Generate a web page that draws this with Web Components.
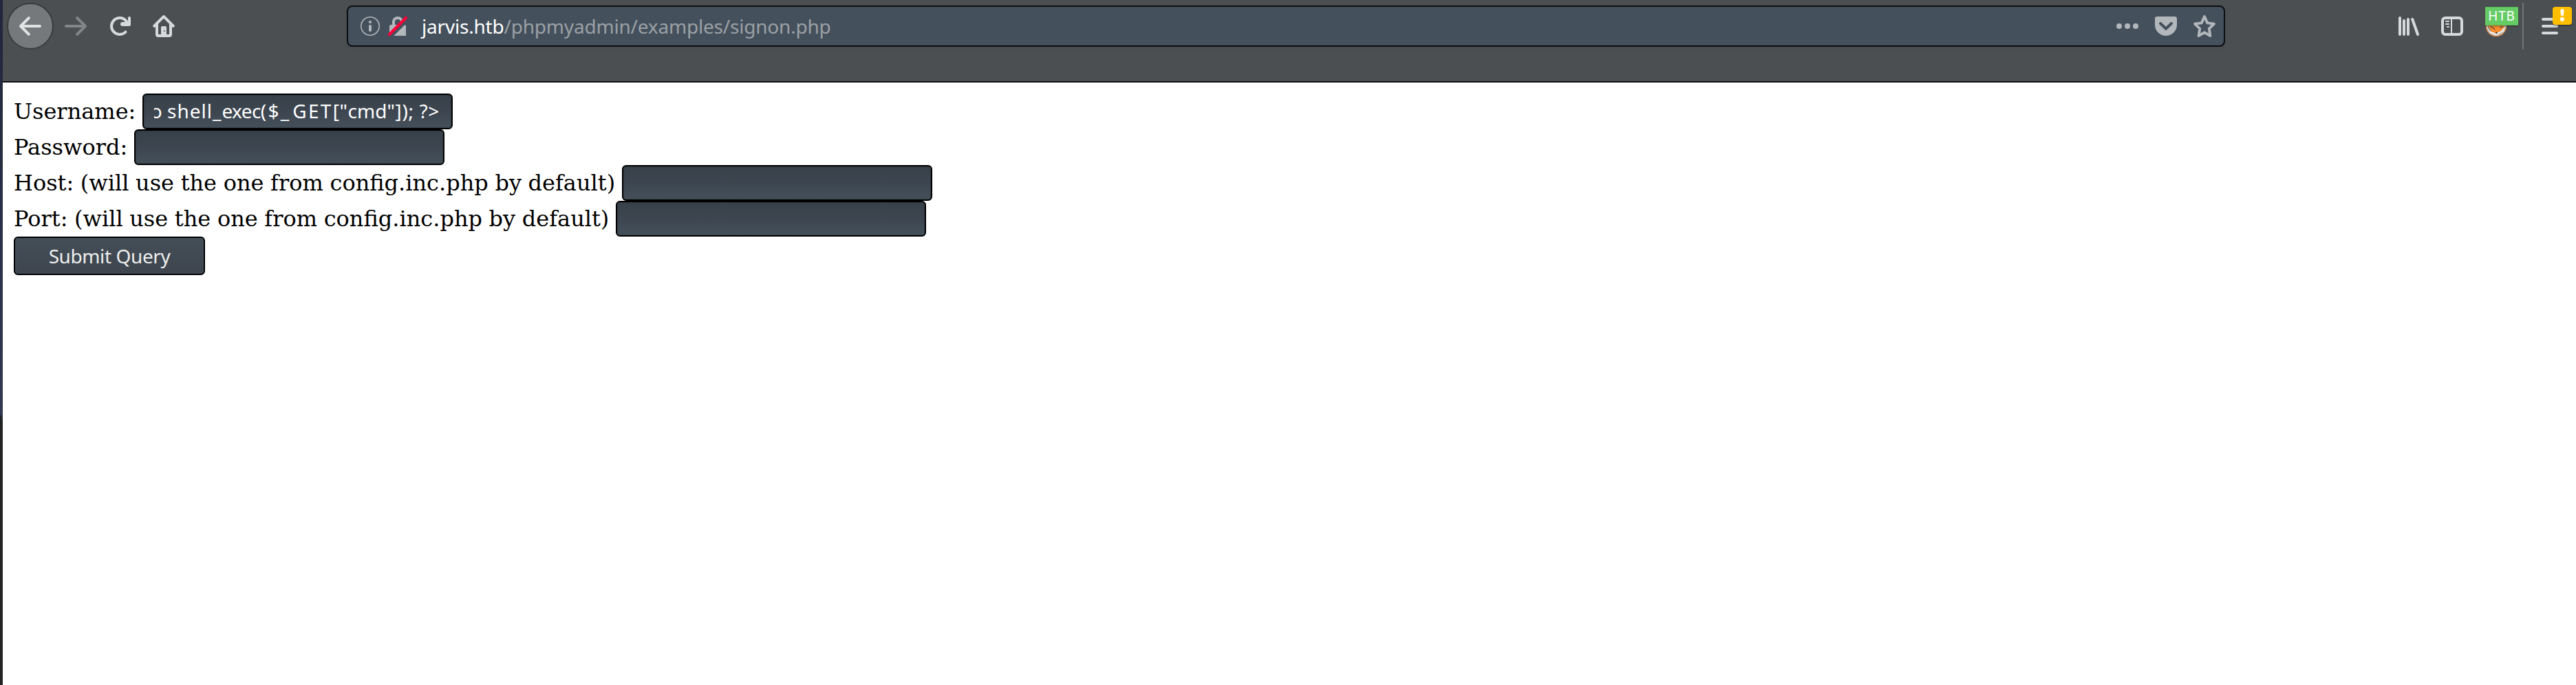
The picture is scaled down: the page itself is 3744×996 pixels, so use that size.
<!DOCTYPE html>
<html lang="en">
<head>
<meta charset="utf-8">
<title>signon.php</title>
<style>
html,body{margin:0;height:100%;background:#fff;overflow:hidden}
</style>
</head>
<body>
<browser-window></browser-window>
<script>
const define = (name, html, setup) => {
  const t = document.createElement('template');
  t.innerHTML = html;
  customElements.define(name, class extends HTMLElement {
    constructor() {
      super();
      this.attachShadow({mode: 'open'}).append(t.content.cloneNode(true));
    }
    connectedCallback() { if (setup) setup(this, this.shadowRoot); }
  });
};

const icons = {
  back: '<path d="M15 7H3.4l4.3-4.3a1 1 0 0 0-1.4-1.4l-6 6a1 1 0 0 0 0 1.4l6 6a1 1 0 0 0 1.4-1.4L3.4 9H15a1 1 0 0 0 0-2z"/>',
  forward: '<path d="M1 7h11.6L8.3 2.7a1 1 0 0 1 1.4-1.4l6 6a1 1 0 0 1 0 1.4l-6 6a1 1 0 0 1-1.4-1.4L12.6 9H1a1 1 0 0 1 0-2z"/>',
  reload: '<path d="M15 1a1 1 0 0 0-1 1v2.400A7 7 0 1 0 12.900 13a1 1 0 1 0-1.500-1.300A5 5 0 1 1 12 5H10a1 1 0 0 0 0 3h5a1 1 0 0 0 1-1V2a1 1 0 0 0-1-1z" transform="translate(0 0)"/>',
  home: '<path fill-rule="evenodd" d="M15.700 7.300l-7-7a1 1 0 0 0-1.400 0l-7 7a1 1 0 0 0 1.400 1.400L2 8.400V14a2 2 0 0 0 2 2h8a2 2 0 0 0 2-2V8.400l.3.3a1 1 0 0 0 1.400-1.400zM12 13.500a.5.5 0 0 1-.5.5H10V9a1 1 0 0 0-1-1H7a1 1 0 0 0-1 1v5H4.500a.5.5 0 0 1-.5-.5V6.400l4-4 4 4zM8.500 11a.5.5 0 1 0 0 1 .5.5 0 0 0 0-1z"/>',
  info: '<circle cx="8" cy="8" r="6.600" fill="none" stroke="currentColor" stroke-width=".8"/><circle cx="8" cy="5" r="1.050"/><path d="M8 7a1 1 0 0 1 1 1v3a1 1 0 0 1-2 0V8a1 1 0 0 1 1-1z"/>',
  lock: '<path d="M4 8V5a4 4 0 0 1 8 0v2h.7a1.300 1.300 0 0 1 1.300 1.300V15H2V8.300A1.300 1.300 0 0 1 3.300 7H4zm2-1h4V5a2 2 0 0 0-4 0z"/><path d="M2.800 15.800L15.800 2.800" stroke="#44505c" stroke-width="2.200"/><path d="M2 14L14 2" stroke="#ff0039" stroke-width="2.100" stroke-linecap="round"/>',
  dots: '<circle cx="2" cy="8" r="2"/><circle cx="8" cy="8" r="2"/><circle cx="14" cy="8" r="2"/>',
  pocket: '<path d="M1.700 1h12.600A1.700 1.700 0 0 1 16 2.700V7A8 8 0 0 1 0 7V2.700A1.700 1.700 0 0 1 1.700 1z"/><path d="M4 6l4 3.900L12 6" fill="none" stroke="#44505c" stroke-width="2" stroke-linecap="round" stroke-linejoin="round"/>',
  star: '<path d="M8 1l2.100 4.700 4.900.6-3.600 3.500.8 5.200L8 12.600 3.800 15l.8-5.200L1 6.300l4.900-.6z" fill="none" stroke="currentColor" stroke-width="1.900" stroke-linejoin="round"/>',
  library: '<path d="M2 2v12M5 4v10M8 3v11M11.100 3l3.900 11" stroke="currentColor" stroke-width="2" stroke-linecap="round"/>',
  sidebar: '<rect x="1" y="2" width="14" height="12" rx="2" fill="none" stroke="currentColor" stroke-width="2"/><path d="M7.500 2v12" stroke="currentColor" stroke-width="1"/><path d="M3.500 4.500h2M3.500 6.500h2M4.500 8.500h1" stroke="currentColor" stroke-width="1" stroke-linecap="round"/>',
  menu: '<path d="M3 3h10M3 8h10M3 13h10" stroke="currentColor" stroke-width="2" stroke-linecap="round"/>',
  fox: '<circle cx="8" cy="8" r="7.200" fill="#77797a" stroke="#e88a3c" stroke-width=".7"/><circle cx="8" cy="8" r="6.500" fill="none" stroke="#c9c9c9" stroke-width=".8"/><path d="M1.800 7L5 5l3 1 3-1 3.300 2-1.600 3.600-4.700 3-3.600-1.600z" fill="#f68b2c"/><path d="M1.300 8.300l2.500 3.500L8 13.200l3.700-1.800 2.700-3.200-1 3.500L8 14.800l-4.500-1.900z" fill="#eee"/><path d="M3.500 8.400l2 .6 1.600 1.500M12.800 8.200l-2.300.9" stroke="#444" stroke-width=".6" fill="none"/><circle cx="8.200" cy="12.900" r=".6" fill="#333"/>'
};

define('ui-icon', `<style>
:host{display:block;width:32px;height:32px;flex:none}
svg{display:block;width:100%;height:100%;overflow:visible}
</style><svg viewBox="0 0 16 16" fill="currentColor"></svg>`,
(el, root) => { root.querySelector('svg').innerHTML = icons[el.getAttribute('name')]; });

define('address-bar', `<style>
:host{display:flex;box-sizing:border-box;width:2730px;height:60px;border:2px solid #0c0d10;border-radius:8px;background:#44505c;align-items:center;padding:0 12px 0 16px;color:#b2b7bc;box-shadow:0 2px 6px #0000000d;
font:28px/56px "Noto Sans",sans-serif}
.lock{margin-left:8px}
.url{margin-left:19px;flex:1;white-space:pre;letter-spacing:-.2px;color:#9ba0a5}
b{font-weight:400;color:#fff}
.pocket{margin-left:24px}.star{margin-left:24px}
</style>
<ui-icon name="info"></ui-icon><ui-icon name="lock" class="lock"></ui-icon>
<span class="url"><b>jarvis.htb</b>/phpmyadmin/examples/signon.php</span>
<ui-icon name="dots"></ui-icon><ui-icon name="pocket" class="pocket"></ui-icon><ui-icon name="star" class="star"></ui-icon>`);

define('nav-toolbar', `<style>
:host{display:flex;box-sizing:border-box;height:120px;background:#4b4f52;border-bottom:2px solid #0c0d10;padding:0 6px;color:#d7d8d9;align-items:flex-start}
.back{box-sizing:border-box;width:68px;height:68px;margin-top:4px;border:2px solid #393c3f;border-radius:50%;background:#75797c;display:grid;place-items:center;color:#e1e2e2}
ui-icon{margin-top:22px}
.back ui-icon{margin:0}
.fwd{margin-left:16px;color:#838688}
.reload{margin-left:32px}.home{margin-left:32px}
address-bar{margin:8px 0 0 250px}
.lib{margin-left:250px}
.side{margin-left:32px}
.ext{position:relative;margin-left:32px}
.htb{position:absolute;left:0;top:10px;width:48px;height:27px;box-sizing:border-box;background:#6c6;border-top:1px solid #58b658;border-bottom:1px solid #58b658;color:#fff;font:19px/24px "Noto Sans",sans-serif;letter-spacing:.8px;text-align:center;box-shadow:0 2px 1px #0003}
.sep{width:2px;height:68px;margin:4px 0 0 22px;background:#707375}
.menu{position:relative;margin-left:22px}
.warn{position:absolute;left:20px;top:10px;width:28px;height:26px;border-radius:4px;background:#ffbf00;box-shadow:0 2px 1px #0004}
.warn svg{display:block}
</style>
<div class="back"><ui-icon name="back"></ui-icon></div>
<ui-icon class="fwd" name="forward"></ui-icon>
<ui-icon class="reload" name="reload"></ui-icon>
<ui-icon class="home" name="home"></ui-icon>
<address-bar></address-bar>
<ui-icon class="lib" name="library"></ui-icon>
<ui-icon class="side" name="sidebar"></ui-icon>
<div class="ext"><ui-icon name="fox"></ui-icon><span class="htb">HTB</span></div>
<div class="sep"></div>
<div class="menu"><ui-icon name="menu"></ui-icon><span class="warn"><svg width="28" height="26" fill="#fff"><path d="M11.300 5.600a2.700 2.700 0 0 1 5.400 0l-.6 5.600a2.100 2.100 0 0 1-4.200 0z"/><circle cx="14" cy="18" r="3"/></svg></span></div>`);

define('form-field', `<style>
:host{display:flex;height:52px;font:32px/52px "DejaVu Serif",serif;word-spacing:-.55px;color:#000;white-space:pre}
.box{box-sizing:border-box;width:451px;height:52px;border:2px solid #000;border-radius:6px;background:linear-gradient(#384149,#3d4650 50%,#44505a);box-shadow:inset 0 0 2px 1px #0002;padding:0 17px 0 15px;display:flex}
.clip{flex:1;min-width:0;overflow:hidden;display:flex;justify-content:flex-end;font:28px/47px "Noto Sans",sans-serif;word-spacing:0;color:#fff}
</style><slot></slot> <div class="box"><div class="clip"><slot name="value"></slot></div></div>`);

define('submit-button', `<style>
:host{display:block;box-sizing:border-box;width:278px;height:56px;border:2px solid #000;border-radius:6px;background:linear-gradient(#434e57,#3e454f);box-shadow:inset 0 0 0 2px #47535e66;color:#eee;text-align:center;font:28px/52px "Noto Sans",sans-serif;letter-spacing:-.4px}
</style><slot></slot>`);

define('browser-window', `<style>
:host{display:flex;height:100vh}
.edge{width:4px;flex:none;display:flex;flex-direction:column;justify-content:flex-end;background:linear-gradient(#22263a,#31384f 604px)}
.edge div{height:393px;background:#202321;border-radius:0 4px 0 0/0 14px 0 0}
.main{flex:1;min-width:0}
.page{padding:16px}
.w{letter-spacing:1px}.n{letter-spacing:-.6px}.p{letter-spacing:2.300px}.u{letter-spacing:5px}.s{letter-spacing:.65px}
</style>
<div class="edge"><div></div></div>
<div class="main"><nav-toolbar></nav-toolbar>
<div class="page">
<form-field>Username:<span slot="value">o <span class="w">shell_</span><span class="n">exec</span><span class="p">($</span><span class="u">_</span><span class="p">GET</span><span class="s">["</span>cmd<span class="s">"]); ?&gt;</span></span></form-field>
<form-field>Password:</form-field>
<form-field>Host: (will use the one from config.inc.php by default)</form-field>
<form-field>Port: (will use the one from config.inc.php by default)</form-field>
<submit-button>Submit Query</submit-button>
</div></div>`);
</script>
</body>
</html>
